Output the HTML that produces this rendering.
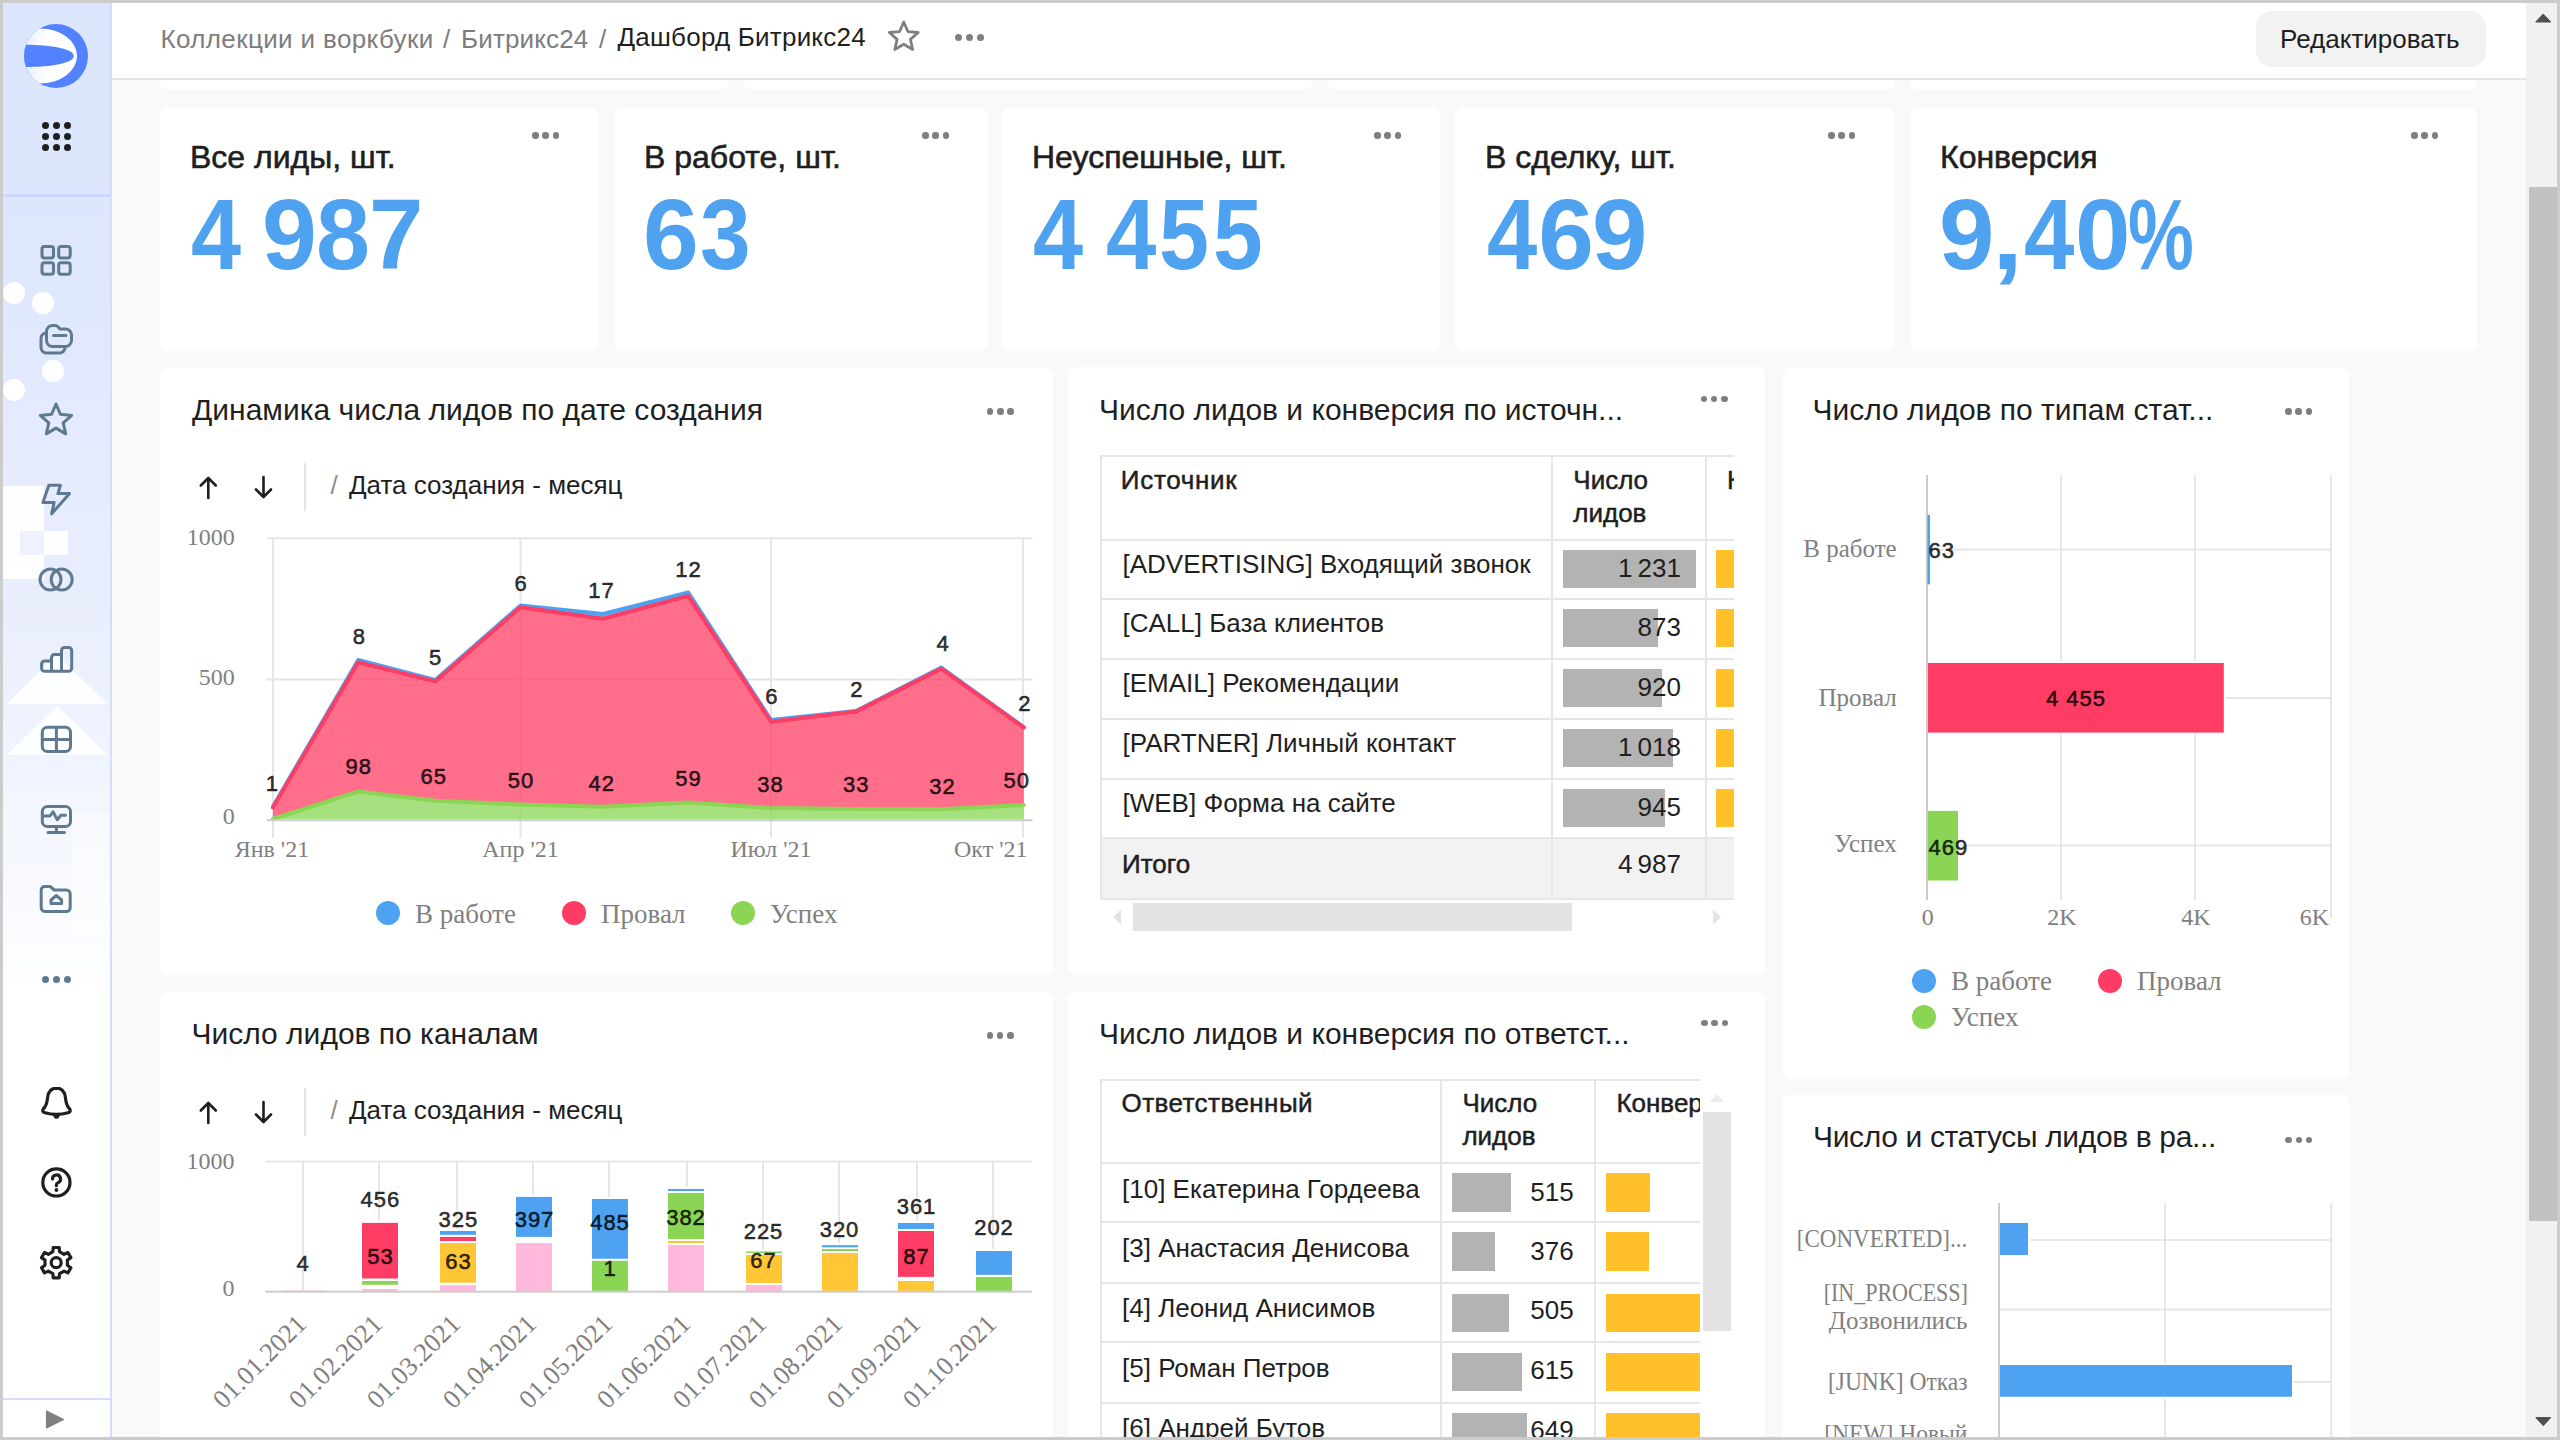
<!DOCTYPE html><html><head><meta charset="utf-8"><style>
html,body{margin:0;padding:0;}
body{width:2560px;height:1440px;overflow:hidden;position:relative;background:#f9f9f9;font-family:"Liberation Sans",sans-serif;}
.t{position:absolute;white-space:nowrap;}
.r{position:absolute;}
</style></head><body>
<div class="r" style="left:0px;top:0px;width:2560px;height:1440px;background:#f9f9f9;"></div>
<div class="r" style="left:160px;top:40px;width:568px;height:50px;background:#fff;border-radius:8px"></div>
<div class="r" style="left:744px;top:40px;width:568px;height:50px;background:#fff;border-radius:8px"></div>
<div class="r" style="left:1328px;top:40px;width:567px;height:50px;background:#fff;border-radius:8px"></div>
<div class="r" style="left:1910px;top:40px;width:567px;height:50px;background:#fff;border-radius:8px"></div>
<div class="r" style="left:160px;top:107.5px;width:438px;height:243.5px;background:#fff;border-radius:8px"></div>
<div class="t" style="left:190px;top:141.41px;font-family:'Liberation Sans', sans-serif;font-size:32px;line-height:32px;color:#1f1f1f;font-weight:400;-webkit-text-stroke:0.6px #1f1f1f;">Все лиды, шт.</div>
<div class="t" style="left:191.35px;top:184.05px;font-family:'Liberation Sans', sans-serif;font-size:100px;line-height:100px;color:#4fa2f0;font-weight:700;transform:scaleX(0.8993);transform-origin:0 0">4</div>
<div class="t" style="left:261.85px;top:184.05px;font-family:'Liberation Sans', sans-serif;font-size:100px;line-height:100px;color:#4fa2f0;font-weight:700;transform:scaleX(0.9855);transform-origin:0 0">9</div>
<div class="t" style="left:315.79px;top:184.05px;font-family:'Liberation Sans', sans-serif;font-size:100px;line-height:100px;color:#4fa2f0;font-weight:700;transform:scaleX(0.9715);transform-origin:0 0">8</div>
<div class="t" style="left:368.79px;top:184.05px;font-family:'Liberation Sans', sans-serif;font-size:100px;line-height:100px;color:#4fa2f0;font-weight:700;transform:scaleX(0.9787);transform-origin:0 0">7</div>
<div class="r" style="left:532.00px;top:132.45px;width:6.5px;height:6.5px;border-radius:50%;background:#7f7f7f"></div>
<div class="r" style="left:542.25px;top:132.45px;width:6.5px;height:6.5px;border-radius:50%;background:#7f7f7f"></div>
<div class="r" style="left:552.50px;top:132.45px;width:6.5px;height:6.5px;border-radius:50%;background:#7f7f7f"></div>
<div class="r" style="left:614px;top:107.5px;width:374px;height:243.5px;background:#fff;border-radius:8px"></div>
<div class="t" style="left:644px;top:141.41px;font-family:'Liberation Sans', sans-serif;font-size:32px;line-height:32px;color:#1f1f1f;font-weight:400;-webkit-text-stroke:0.6px #1f1f1f;">В работе, шт.</div>
<div class="t" style="left:642.89px;top:184.05px;font-family:'Liberation Sans', sans-serif;font-size:100px;line-height:100px;color:#4fa2f0;font-weight:700;transform:scaleX(1.0021);transform-origin:0 0">6</div>
<div class="t" style="left:699.80px;top:184.05px;font-family:'Liberation Sans', sans-serif;font-size:100px;line-height:100px;color:#4fa2f0;font-weight:700;transform:scaleX(0.9115);transform-origin:0 0">3</div>
<div class="r" style="left:922.00px;top:132.45px;width:6.5px;height:6.5px;border-radius:50%;background:#7f7f7f"></div>
<div class="r" style="left:932.25px;top:132.45px;width:6.5px;height:6.5px;border-radius:50%;background:#7f7f7f"></div>
<div class="r" style="left:942.50px;top:132.45px;width:6.5px;height:6.5px;border-radius:50%;background:#7f7f7f"></div>
<div class="r" style="left:1002px;top:107.5px;width:438px;height:243.5px;background:#fff;border-radius:8px"></div>
<div class="t" style="left:1032px;top:141.41px;font-family:'Liberation Sans', sans-serif;font-size:32px;line-height:32px;color:#1f1f1f;font-weight:400;-webkit-text-stroke:0.6px #1f1f1f;">Неуспешные, шт.</div>
<div class="t" style="left:1033.35px;top:184.05px;font-family:'Liberation Sans', sans-serif;font-size:100px;line-height:100px;color:#4fa2f0;font-weight:700;transform:scaleX(0.9011);transform-origin:0 0">4</div>
<div class="t" style="left:1105.74px;top:184.05px;font-family:'Liberation Sans', sans-serif;font-size:100px;line-height:100px;color:#4fa2f0;font-weight:700;transform:scaleX(0.9049);transform-origin:0 0">4</div>
<div class="t" style="left:1159.41px;top:184.05px;font-family:'Liberation Sans', sans-serif;font-size:100px;line-height:100px;color:#4fa2f0;font-weight:700;transform:scaleX(0.8994);transform-origin:0 0">5</div>
<div class="t" style="left:1213.03px;top:184.05px;font-family:'Liberation Sans', sans-serif;font-size:100px;line-height:100px;color:#4fa2f0;font-weight:700;transform:scaleX(0.8934);transform-origin:0 0">5</div>
<div class="r" style="left:1374.00px;top:132.45px;width:6.5px;height:6.5px;border-radius:50%;background:#7f7f7f"></div>
<div class="r" style="left:1384.25px;top:132.45px;width:6.5px;height:6.5px;border-radius:50%;background:#7f7f7f"></div>
<div class="r" style="left:1394.50px;top:132.45px;width:6.5px;height:6.5px;border-radius:50%;background:#7f7f7f"></div>
<div class="r" style="left:1455px;top:107.5px;width:439px;height:243.5px;background:#fff;border-radius:8px"></div>
<div class="t" style="left:1485px;top:141.41px;font-family:'Liberation Sans', sans-serif;font-size:32px;line-height:32px;color:#1f1f1f;font-weight:400;-webkit-text-stroke:0.6px #1f1f1f;">В сделку, шт.</div>
<div class="t" style="left:1487.25px;top:184.05px;font-family:'Liberation Sans', sans-serif;font-size:100px;line-height:100px;color:#4fa2f0;font-weight:700;transform:scaleX(0.9030);transform-origin:0 0">4</div>
<div class="t" style="left:1538.30px;top:184.05px;font-family:'Liberation Sans', sans-serif;font-size:100px;line-height:100px;color:#4fa2f0;font-weight:700;transform:scaleX(1.0000);transform-origin:0 0">6</div>
<div class="t" style="left:1592.01px;top:184.05px;font-family:'Liberation Sans', sans-serif;font-size:100px;line-height:100px;color:#4fa2f0;font-weight:700;transform:scaleX(0.9959);transform-origin:0 0">9</div>
<div class="r" style="left:1828.00px;top:132.45px;width:6.5px;height:6.5px;border-radius:50%;background:#7f7f7f"></div>
<div class="r" style="left:1838.25px;top:132.45px;width:6.5px;height:6.5px;border-radius:50%;background:#7f7f7f"></div>
<div class="r" style="left:1848.50px;top:132.45px;width:6.5px;height:6.5px;border-radius:50%;background:#7f7f7f"></div>
<div class="r" style="left:1910px;top:107.5px;width:567px;height:243.5px;background:#fff;border-radius:8px"></div>
<div class="t" style="left:1940px;top:141.41px;font-family:'Liberation Sans', sans-serif;font-size:32px;line-height:32px;color:#1f1f1f;font-weight:400;-webkit-text-stroke:0.6px #1f1f1f;">Конверсия</div>
<div class="t" style="left:1939.31px;top:184.05px;font-family:'Liberation Sans', sans-serif;font-size:100px;line-height:100px;color:#4fa2f0;font-weight:700;transform:scaleX(0.9959);transform-origin:0 0">9</div>
<div class="t" style="left:1992.39px;top:184.05px;font-family:'Liberation Sans', sans-serif;font-size:100px;line-height:100px;color:#4fa2f0;font-weight:700;transform:scaleX(1.1189);transform-origin:0 0">,</div>
<div class="t" style="left:2024.04px;top:184.05px;font-family:'Liberation Sans', sans-serif;font-size:100px;line-height:100px;color:#4fa2f0;font-weight:700;transform:scaleX(0.9049);transform-origin:0 0">4</div>
<div class="t" style="left:2075.42px;top:184.05px;font-family:'Liberation Sans', sans-serif;font-size:100px;line-height:100px;color:#4fa2f0;font-weight:700;transform:scaleX(0.9958);transform-origin:0 0">0</div>
<div class="t" style="left:2128.15px;top:184.05px;font-family:'Liberation Sans', sans-serif;font-size:100px;line-height:100px;color:#4fa2f0;font-weight:700;transform:scaleX(0.7399);transform-origin:0 0">%</div>
<div class="r" style="left:2411.00px;top:132.45px;width:6.5px;height:6.5px;border-radius:50%;background:#7f7f7f"></div>
<div class="r" style="left:2421.25px;top:132.45px;width:6.5px;height:6.5px;border-radius:50%;background:#7f7f7f"></div>
<div class="r" style="left:2431.50px;top:132.45px;width:6.5px;height:6.5px;border-radius:50%;background:#7f7f7f"></div>
<div class="r" style="left:160px;top:367.5px;width:893px;height:607px;background:#fff;border-radius:8px"></div>
<div class="r" style="left:1068px;top:367px;width:697px;height:607.5px;background:#fff;border-radius:8px"></div>
<div class="r" style="left:1782.5px;top:367.5px;width:566.5px;height:711px;background:#fff;border-radius:8px"></div>
<div class="r" style="left:160px;top:991.5px;width:893px;height:600px;background:#fff;border-radius:8px"></div>
<div class="r" style="left:1068px;top:991.5px;width:697px;height:600px;background:#fff;border-radius:8px"></div>
<div class="r" style="left:1782px;top:1095px;width:567.5px;height:500px;background:#fff;border-radius:8px"></div>
<div class="t" style="left:192px;top:394.61px;font-family:'Liberation Sans', sans-serif;font-size:30px;line-height:30px;color:#1f1f1f;font-weight:400;">Динамика числа лидов по дате создания</div>
<div class="r" style="left:986.75px;top:408.35px;width:6.5px;height:6.5px;border-radius:50%;background:#7f7f7f"></div>
<div class="r" style="left:997.00px;top:408.35px;width:6.5px;height:6.5px;border-radius:50%;background:#7f7f7f"></div>
<div class="r" style="left:1007.25px;top:408.35px;width:6.5px;height:6.5px;border-radius:50%;background:#7f7f7f"></div>
<svg class="r" style="left:190px;top:460px" width="100" height="60" viewBox="190 460 100 60"><path d="M208.3 498 V478.5 M200.8 485.5 L208.3 478 L215.8 485.5" fill="none" stroke="#1f1f1f" stroke-width="2.6" stroke-linecap="round" stroke-linejoin="round"/><path d="M263.5 477 V496.5 M256 489.5 L263.5 497 L271 489.5" fill="none" stroke="#1f1f1f" stroke-width="2.6" stroke-linecap="round" stroke-linejoin="round"/></svg>
<div class="r" style="left:304px;top:463px;width:2px;height:48px;background:#e5e5e5;"></div>
<div class="t" style="left:330.5px;top:472.49px;font-family:'Liberation Sans', sans-serif;font-size:26px;line-height:26px;color:#8c8c8c;font-weight:400;">/</div>
<div class="t" style="left:348.9px;top:472.49px;font-family:'Liberation Sans', sans-serif;font-size:26px;line-height:26px;color:#1f1f1f;font-weight:400;">Дата создания - месяц</div>
<svg class="r" style="left:160px;top:500px" width="893" height="380" viewBox="160 500 893 380"><rect x="266.7" y="537.3" width="765.7" height="2" fill="#e6e6e6"/><rect x="266.7" y="678.5" width="765.7" height="2" fill="#e6e6e6"/><rect x="272" y="538" width="2" height="299.5" fill="#e6e6e6"/><rect x="519.5" y="538" width="2" height="299.5" fill="#e6e6e6"/><rect x="770" y="538" width="2" height="299.5" fill="#e6e6e6"/><rect x="1022" y="538" width="2" height="299.5" fill="#e6e6e6"/><polygon points="273,806.5 358.25,660 435.25,680 520.5,605.5 603,614 688.25,592.5 771,720 856,711 941.25,667.5 1023.75,727 1023.75,727.6 941.25,668.6 856,711.6 771,721.7 688.25,595.9 603,618.8 520.5,607.2 435.25,681.4 358.25,662.2 273,807.5" fill="#4da2f1" fill-opacity="0.75"/><polyline points="273,806.5 358.25,660 435.25,680 520.5,605.5 603,614 688.25,592.5 771,720 856,711 941.25,667.5 1023.75,727" fill="none" stroke="#4da2f1" stroke-width="4" stroke-linejoin="round" stroke-linecap="round"/><polygon points="273,807.5 358.25,662.2 435.25,681.4 520.5,607.2 603,618.8 688.25,595.9 771,721.7 856,711.6 941.25,668.6 1023.75,727.6 1023.75,805 941.25,809.2 856,809 771,808 688.25,802.5 603,806.8 520.5,804.5 435.25,800.8 358.25,791.5 273,819" fill="#ff3d64" fill-opacity="0.75"/><polyline points="273,807.5 358.25,662.2 435.25,681.4 520.5,607.2 603,618.8 688.25,595.9 771,721.7 856,711.6 941.25,668.6 1023.75,727.6" fill="none" stroke="#ff3d64" stroke-width="4" stroke-linejoin="round" stroke-linecap="round"/><polygon points="273,819 358.25,791.5 435.25,800.8 520.5,804.5 603,806.8 688.25,802.5 771,808 856,809 941.25,809.2 1023.75,805 1023.75,819.25 941.25,819.25 856,819.25 771,819.25 688.25,819.25 603,819.25 520.5,819.25 435.25,819.25 358.25,819.25 273,819.25" fill="#8ad554" fill-opacity="0.75"/><polyline points="273,819 358.25,791.5 435.25,800.8 520.5,804.5 603,806.8 688.25,802.5 771,808 856,809 941.25,809.2 1023.75,805" fill="none" stroke="#8ad554" stroke-width="4" stroke-linejoin="round" stroke-linecap="round"/><rect x="266.7" y="819.25" width="765.7" height="2" fill="#cccccc"/></svg>
<div class="t" style="right:2325.3px;top:524.90px;font-family:'Liberation Serif', serif;font-size:24px;line-height:24px;color:#808080;font-weight:400;">1000</div>
<div class="t" style="right:2325.3px;top:664.90px;font-family:'Liberation Serif', serif;font-size:24px;line-height:24px;color:#808080;font-weight:400;">500</div>
<div class="t" style="right:2325.3px;top:804.40px;font-family:'Liberation Serif', serif;font-size:24px;line-height:24px;color:#808080;font-weight:400;">0</div>
<div class="t" style="left:271.9px;transform:translateX(-50%);top:837.40px;font-family:'Liberation Serif', serif;font-size:24px;line-height:24px;color:#808080;font-weight:400;">Янв '21</div>
<div class="t" style="left:520.5px;transform:translateX(-50%);top:837.40px;font-family:'Liberation Serif', serif;font-size:24px;line-height:24px;color:#808080;font-weight:400;">Апр '21</div>
<div class="t" style="left:771px;transform:translateX(-50%);top:837.40px;font-family:'Liberation Serif', serif;font-size:24px;line-height:24px;color:#808080;font-weight:400;">Июл '21</div>
<div class="t" style="right:1532.5px;top:837.40px;font-family:'Liberation Serif', serif;font-size:24px;line-height:24px;color:#808080;font-weight:400;">Окт '21</div>
<div class="t" style="left:272.25px;transform:translateX(-50%);top:772.63px;font-family:'Liberation Sans', sans-serif;font-size:22px;line-height:22px;color:rgba(0,0,0,0.8);font-weight:400;-webkit-text-stroke:0.6px rgba(0,0,0,0.78);letter-spacing:1px;">1</div>
<div class="t" style="left:359.25px;transform:translateX(-50%);top:626.38px;font-family:'Liberation Sans', sans-serif;font-size:22px;line-height:22px;color:rgba(0,0,0,0.8);font-weight:400;-webkit-text-stroke:0.6px rgba(0,0,0,0.78);letter-spacing:1px;">8</div>
<div class="t" style="left:435.5px;transform:translateX(-50%);top:646.88px;font-family:'Liberation Sans', sans-serif;font-size:22px;line-height:22px;color:rgba(0,0,0,0.8);font-weight:400;-webkit-text-stroke:0.6px rgba(0,0,0,0.78);letter-spacing:1px;">5</div>
<div class="t" style="left:521.0px;transform:translateX(-50%);top:572.63px;font-family:'Liberation Sans', sans-serif;font-size:22px;line-height:22px;color:rgba(0,0,0,0.8);font-weight:400;-webkit-text-stroke:0.6px rgba(0,0,0,0.78);letter-spacing:1px;">6</div>
<div class="t" style="left:601.5px;transform:translateX(-50%);top:580.13px;font-family:'Liberation Sans', sans-serif;font-size:22px;line-height:22px;color:rgba(0,0,0,0.8);font-weight:400;-webkit-text-stroke:0.6px rgba(0,0,0,0.78);letter-spacing:1px;">17</div>
<div class="t" style="left:688.5px;transform:translateX(-50%);top:558.88px;font-family:'Liberation Sans', sans-serif;font-size:22px;line-height:22px;color:rgba(0,0,0,0.8);font-weight:400;-webkit-text-stroke:0.6px rgba(0,0,0,0.78);letter-spacing:1px;">12</div>
<div class="t" style="left:771.75px;transform:translateX(-50%);top:686.38px;font-family:'Liberation Sans', sans-serif;font-size:22px;line-height:22px;color:rgba(0,0,0,0.8);font-weight:400;-webkit-text-stroke:0.6px rgba(0,0,0,0.78);letter-spacing:1px;">6</div>
<div class="t" style="left:856.75px;transform:translateX(-50%);top:678.88px;font-family:'Liberation Sans', sans-serif;font-size:22px;line-height:22px;color:rgba(0,0,0,0.8);font-weight:400;-webkit-text-stroke:0.6px rgba(0,0,0,0.78);letter-spacing:1px;">2</div>
<div class="t" style="left:943.0px;transform:translateX(-50%);top:632.63px;font-family:'Liberation Sans', sans-serif;font-size:22px;line-height:22px;color:rgba(0,0,0,0.8);font-weight:400;-webkit-text-stroke:0.6px rgba(0,0,0,0.78);letter-spacing:1px;">4</div>
<div class="t" style="left:1024.75px;transform:translateX(-50%);top:692.63px;font-family:'Liberation Sans', sans-serif;font-size:22px;line-height:22px;color:rgba(0,0,0,0.8);font-weight:400;-webkit-text-stroke:0.6px rgba(0,0,0,0.78);letter-spacing:1px;">2</div>
<div class="t" style="left:358.75px;transform:translateX(-50%);top:756.38px;font-family:'Liberation Sans', sans-serif;font-size:22px;line-height:22px;color:rgba(0,0,0,0.8);font-weight:400;-webkit-text-stroke:0.6px rgba(0,0,0,0.78);letter-spacing:1px;">98</div>
<div class="t" style="left:433.75px;transform:translateX(-50%);top:765.88px;font-family:'Liberation Sans', sans-serif;font-size:22px;line-height:22px;color:rgba(0,0,0,0.8);font-weight:400;-webkit-text-stroke:0.6px rgba(0,0,0,0.78);letter-spacing:1px;">65</div>
<div class="t" style="left:521.0px;transform:translateX(-50%);top:770.13px;font-family:'Liberation Sans', sans-serif;font-size:22px;line-height:22px;color:rgba(0,0,0,0.8);font-weight:400;-webkit-text-stroke:0.6px rgba(0,0,0,0.78);letter-spacing:1px;">50</div>
<div class="t" style="left:601.75px;transform:translateX(-50%);top:772.63px;font-family:'Liberation Sans', sans-serif;font-size:22px;line-height:22px;color:rgba(0,0,0,0.8);font-weight:400;-webkit-text-stroke:0.6px rgba(0,0,0,0.78);letter-spacing:1px;">42</div>
<div class="t" style="left:688.5px;transform:translateX(-50%);top:768.38px;font-family:'Liberation Sans', sans-serif;font-size:22px;line-height:22px;color:rgba(0,0,0,0.8);font-weight:400;-webkit-text-stroke:0.6px rgba(0,0,0,0.78);letter-spacing:1px;">59</div>
<div class="t" style="left:770.5px;transform:translateX(-50%);top:773.88px;font-family:'Liberation Sans', sans-serif;font-size:22px;line-height:22px;color:rgba(0,0,0,0.8);font-weight:400;-webkit-text-stroke:0.6px rgba(0,0,0,0.78);letter-spacing:1px;">38</div>
<div class="t" style="left:856.25px;transform:translateX(-50%);top:773.88px;font-family:'Liberation Sans', sans-serif;font-size:22px;line-height:22px;color:rgba(0,0,0,0.8);font-weight:400;-webkit-text-stroke:0.6px rgba(0,0,0,0.78);letter-spacing:1px;">33</div>
<div class="t" style="left:942.5px;transform:translateX(-50%);top:776.38px;font-family:'Liberation Sans', sans-serif;font-size:22px;line-height:22px;color:rgba(0,0,0,0.8);font-weight:400;-webkit-text-stroke:0.6px rgba(0,0,0,0.78);letter-spacing:1px;">32</div>
<div class="t" style="left:1016.75px;transform:translateX(-50%);top:770.13px;font-family:'Liberation Sans', sans-serif;font-size:22px;line-height:22px;color:rgba(0,0,0,0.8);font-weight:400;-webkit-text-stroke:0.6px rgba(0,0,0,0.78);letter-spacing:1px;">50</div>
<div class="r" style="left:375.8px;top:900.7px;width:24px;height:24px;border-radius:50%;background:#4da2f1"></div>
<div class="t" style="left:415px;top:900.69px;font-family:'Liberation Serif', serif;font-size:27px;line-height:27px;color:#808080;font-weight:400;">В работе</div>
<div class="r" style="left:561.9px;top:900.7px;width:24px;height:24px;border-radius:50%;background:#ff3d64"></div>
<div class="t" style="left:601px;top:900.69px;font-family:'Liberation Serif', serif;font-size:27px;line-height:27px;color:#808080;font-weight:400;">Провал</div>
<div class="r" style="left:731px;top:900.7px;width:24px;height:24px;border-radius:50%;background:#8ad554"></div>
<div class="t" style="left:770px;top:900.69px;font-family:'Liberation Serif', serif;font-size:27px;line-height:27px;color:#808080;font-weight:400;">Успех</div>
<div class="t" style="left:1099px;top:394.61px;font-family:'Liberation Sans', sans-serif;font-size:30px;line-height:30px;color:#1f1f1f;font-weight:400;">Число лидов и конверсия по источн...</div>
<div class="r" style="left:1700.50px;top:395.75px;width:6.5px;height:6.5px;border-radius:50%;background:#7f7f7f"></div>
<div class="r" style="left:1710.75px;top:395.75px;width:6.5px;height:6.5px;border-radius:50%;background:#7f7f7f"></div>
<div class="r" style="left:1721.00px;top:395.75px;width:6.5px;height:6.5px;border-radius:50%;background:#7f7f7f"></div>
<div class="r" style="left:1100px;top:455px;width:634px;height:446px;overflow:hidden">
<div class="r" style="left:0px;top:383px;width:700px;height:61px;background:#f2f2f2;"></div>
<div class="r" style="left:0px;top:0px;width:700px;height:2px;background:#e6e6e6;"></div>
<div class="r" style="left:0px;top:84px;width:700px;height:2px;background:#e6e6e6;"></div>
<div class="r" style="left:0px;top:143px;width:700px;height:2px;background:#e6e6e6;"></div>
<div class="r" style="left:0px;top:203px;width:700px;height:2px;background:#e6e6e6;"></div>
<div class="r" style="left:0px;top:263px;width:700px;height:2px;background:#e6e6e6;"></div>
<div class="r" style="left:0px;top:323px;width:700px;height:2px;background:#e6e6e6;"></div>
<div class="r" style="left:0px;top:382px;width:700px;height:2px;background:#e6e6e6;"></div>
<div class="r" style="left:0px;top:443px;width:700px;height:2px;background:#e6e6e6;"></div>
<div class="r" style="left:0px;top:0px;width:2px;height:445px;background:#e6e6e6;"></div>
<div class="r" style="left:451px;top:0px;width:2px;height:445px;background:#e6e6e6;"></div>
<div class="r" style="left:605px;top:0px;width:2px;height:445px;background:#e6e6e6;"></div>
<div class="t" style="left:20.799999999999955px;top:12.29px;font-family:'Liberation Sans', sans-serif;font-size:26px;line-height:26px;color:#1f1f1f;font-weight:400;-webkit-text-stroke:0.5px #1f1f1f;letter-spacing:0.7px;">Источник</div>
<div class="t" style="left:473.29999999999995px;top:12.29px;font-family:'Liberation Sans', sans-serif;font-size:26px;line-height:26px;color:#1f1f1f;font-weight:400;-webkit-text-stroke:0.5px #1f1f1f;">Число</div>
<div class="t" style="left:473.29999999999995px;top:44.99px;font-family:'Liberation Sans', sans-serif;font-size:26px;line-height:26px;color:#1f1f1f;font-weight:400;-webkit-text-stroke:0.5px #1f1f1f;">лидов</div>
<div class="t" style="left:627px;top:12.29px;font-family:'Liberation Sans', sans-serif;font-size:26px;line-height:26px;color:#1f1f1f;font-weight:400;-webkit-text-stroke:0.5px #1f1f1f;">Конверсия</div>
<div class="r" style="left:462.5px;top:94.5px;width:133px;height:38.5px;background:#b3b3b3;"></div>
<div class="r" style="left:616px;top:94.5px;width:40px;height:38.5px;background:#ffc02a;"></div>
<div class="t" style="left:22.5px;top:95.99px;font-family:'Liberation Sans', sans-serif;font-size:26px;line-height:26px;color:#1f1f1f;font-weight:400;">[ADVERTISING] Входящий звонок</div>
<div class="t" style="right:53px;top:99.99px;font-family:'Liberation Sans', sans-serif;font-size:26px;line-height:26px;color:#1f1f1f;font-weight:400;">1&#8201;231</div>
<div class="r" style="left:462.5px;top:153.5px;width:95px;height:38.5px;background:#b3b3b3;"></div>
<div class="r" style="left:616px;top:153.5px;width:40px;height:38.5px;background:#ffc02a;"></div>
<div class="t" style="left:22.5px;top:154.99px;font-family:'Liberation Sans', sans-serif;font-size:26px;line-height:26px;color:#1f1f1f;font-weight:400;">[CALL] База клиентов</div>
<div class="t" style="right:53px;top:158.99px;font-family:'Liberation Sans', sans-serif;font-size:26px;line-height:26px;color:#1f1f1f;font-weight:400;">873</div>
<div class="r" style="left:462.5px;top:213.5px;width:99px;height:38.5px;background:#b3b3b3;"></div>
<div class="r" style="left:616px;top:213.5px;width:40px;height:38.5px;background:#ffc02a;"></div>
<div class="t" style="left:22.5px;top:214.99px;font-family:'Liberation Sans', sans-serif;font-size:26px;line-height:26px;color:#1f1f1f;font-weight:400;">[EMAIL] Рекомендации</div>
<div class="t" style="right:53px;top:218.99px;font-family:'Liberation Sans', sans-serif;font-size:26px;line-height:26px;color:#1f1f1f;font-weight:400;">920</div>
<div class="r" style="left:462.5px;top:273.5px;width:110px;height:38.5px;background:#b3b3b3;"></div>
<div class="r" style="left:616px;top:273.5px;width:40px;height:38.5px;background:#ffc02a;"></div>
<div class="t" style="left:22.5px;top:274.99px;font-family:'Liberation Sans', sans-serif;font-size:26px;line-height:26px;color:#1f1f1f;font-weight:400;">[PARTNER] Личный контакт</div>
<div class="t" style="right:53px;top:278.99px;font-family:'Liberation Sans', sans-serif;font-size:26px;line-height:26px;color:#1f1f1f;font-weight:400;">1&#8201;018</div>
<div class="r" style="left:462.5px;top:333.5px;width:102px;height:38.5px;background:#b3b3b3;"></div>
<div class="r" style="left:616px;top:333.5px;width:40px;height:38.5px;background:#ffc02a;"></div>
<div class="t" style="left:22.5px;top:334.99px;font-family:'Liberation Sans', sans-serif;font-size:26px;line-height:26px;color:#1f1f1f;font-weight:400;">[WEB] Форма на сайте</div>
<div class="t" style="right:53px;top:338.99px;font-family:'Liberation Sans', sans-serif;font-size:26px;line-height:26px;color:#1f1f1f;font-weight:400;">945</div>
<div class="t" style="left:22px;top:395.99px;font-family:'Liberation Sans', sans-serif;font-size:26px;line-height:26px;color:#1f1f1f;font-weight:400;-webkit-text-stroke:0.5px #1f1f1f;">Итого</div>
<div class="t" style="right:53px;top:396.49px;font-family:'Liberation Sans', sans-serif;font-size:26px;line-height:26px;color:#1f1f1f;font-weight:400;">4&#8201;987</div>
</div>
<div class="r" style="left:1133px;top:903px;width:439px;height:28px;background:#e3e3e3;"></div>
<svg class="r" style="left:1105px;top:900px" width="625" height="35" viewBox="1105 900 625 35"><polygon points="1121,909.5 1121,924.5 1113,917" fill="#e3e3e3"/><polygon points="1713,909.5 1713,924.5 1721,917" fill="#e3e3e3"/></svg>
<div class="t" style="left:1812.5px;top:394.61px;font-family:'Liberation Sans', sans-serif;font-size:30px;line-height:30px;color:#1f1f1f;font-weight:400;">Число лидов по типам стат...</div>
<div class="r" style="left:2285.20px;top:408.45px;width:6.5px;height:6.5px;border-radius:50%;background:#7f7f7f"></div>
<div class="r" style="left:2295.45px;top:408.45px;width:6.5px;height:6.5px;border-radius:50%;background:#7f7f7f"></div>
<div class="r" style="left:2305.70px;top:408.45px;width:6.5px;height:6.5px;border-radius:50%;background:#7f7f7f"></div>
<svg class="r" style="left:1900px;top:460px" width="445" height="470" viewBox="1900 460 445 470"><rect x="1927" y="548.6" width="404" height="2" fill="#e6e6e6"/><rect x="1927" y="697" width="404" height="2" fill="#e6e6e6"/><rect x="1927" y="844.4" width="404" height="2" fill="#e6e6e6"/><rect x="2060" y="475" width="2" height="425" fill="#e6e6e6"/><rect x="2194" y="475" width="2" height="425" fill="#e6e6e6"/><rect x="2330" y="475" width="2" height="443" fill="#e6e6e6"/><rect x="1926" y="475" width="2" height="425" fill="#cccccc"/><rect x="1927.5" y="515" width="2.5" height="69.3" fill="#4da2f1"/><rect x="1928" y="661" width="297.8" height="73.6" fill="#fff"/><rect x="1928" y="809" width="32" height="73.6" fill="#fff"/><rect x="1928" y="663" width="295.8" height="69.6" fill="#ff3d64"/><rect x="1928" y="810.9" width="30" height="69.6" fill="#8ad554"/></svg>
<div class="t" style="left:1928.5px;top:540.38px;font-family:'Liberation Sans', sans-serif;font-size:22px;line-height:22px;color:rgba(0,0,0,0.8);font-weight:400;-webkit-text-stroke:0.6px rgba(0,0,0,0.78);letter-spacing:1px;">63</div>
<div class="t" style="left:2076px;transform:translateX(-50%);top:688.38px;font-family:'Liberation Sans', sans-serif;font-size:22px;line-height:22px;color:rgba(0,0,0,0.8);font-weight:400;-webkit-text-stroke:0.6px rgba(0,0,0,0.78);letter-spacing:1px;">4 455</div>
<div class="t" style="left:1928.6px;top:836.98px;font-family:'Liberation Sans', sans-serif;font-size:22px;line-height:22px;color:rgba(0,0,0,0.8);font-weight:400;-webkit-text-stroke:0.6px rgba(0,0,0,0.78);letter-spacing:1px;">469</div>
<div class="t" style="right:663.3px;top:535.86px;font-family:'Liberation Serif', serif;font-size:25px;line-height:25px;color:#808080;font-weight:400;">В работе</div>
<div class="t" style="right:663.3px;top:684.96px;font-family:'Liberation Serif', serif;font-size:25px;line-height:25px;color:#808080;font-weight:400;">Провал</div>
<div class="t" style="right:663.3px;top:831.46px;font-family:'Liberation Serif', serif;font-size:25px;line-height:25px;color:#808080;font-weight:400;">Успех</div>
<div class="t" style="left:1927.7px;transform:translateX(-50%);top:905.10px;font-family:'Liberation Serif', serif;font-size:24px;line-height:24px;color:#808080;font-weight:400;">0</div>
<div class="t" style="left:2061.8px;transform:translateX(-50%);top:905.10px;font-family:'Liberation Serif', serif;font-size:24px;line-height:24px;color:#808080;font-weight:400;">2K</div>
<div class="t" style="left:2196px;transform:translateX(-50%);top:905.10px;font-family:'Liberation Serif', serif;font-size:24px;line-height:24px;color:#808080;font-weight:400;">4K</div>
<div class="t" style="right:231px;top:905.10px;font-family:'Liberation Serif', serif;font-size:24px;line-height:24px;color:#808080;font-weight:400;">6K</div>
<div class="r" style="left:1911.8px;top:969px;width:24px;height:24px;border-radius:50%;background:#4da2f1"></div>
<div class="t" style="left:1951px;top:968.09px;font-family:'Liberation Serif', serif;font-size:27px;line-height:27px;color:#808080;font-weight:400;">В работе</div>
<div class="r" style="left:2097.7px;top:969px;width:24px;height:24px;border-radius:50%;background:#ff3d64"></div>
<div class="t" style="left:2137px;top:968.09px;font-family:'Liberation Serif', serif;font-size:27px;line-height:27px;color:#808080;font-weight:400;">Провал</div>
<div class="r" style="left:1911.8px;top:1004.9px;width:24px;height:24px;border-radius:50%;background:#8ad554"></div>
<div class="t" style="left:1951px;top:1003.89px;font-family:'Liberation Serif', serif;font-size:27px;line-height:27px;color:#808080;font-weight:400;">Успех</div>
<div class="t" style="left:191.5px;top:1019.31px;font-family:'Liberation Sans', sans-serif;font-size:30px;line-height:30px;color:#1f1f1f;font-weight:400;">Число лидов по каналам</div>
<div class="r" style="left:986.50px;top:1032.35px;width:6.5px;height:6.5px;border-radius:50%;background:#7f7f7f"></div>
<div class="r" style="left:996.75px;top:1032.35px;width:6.5px;height:6.5px;border-radius:50%;background:#7f7f7f"></div>
<div class="r" style="left:1007.00px;top:1032.35px;width:6.5px;height:6.5px;border-radius:50%;background:#7f7f7f"></div>
<svg class="r" style="left:190px;top:1084.7px" width="100" height="60.0" viewBox="190 1084.7 100 60.0"><path d="M208.3 1122.7 V1103.2 M200.8 1110.2 L208.3 1102.7 L215.8 1110.2" fill="none" stroke="#1f1f1f" stroke-width="2.6" stroke-linecap="round" stroke-linejoin="round"/><path d="M263.5 1101.7 V1121.2 M256 1114.2 L263.5 1121.7 L271 1114.2" fill="none" stroke="#1f1f1f" stroke-width="2.6" stroke-linecap="round" stroke-linejoin="round"/></svg>
<div class="r" style="left:304px;top:1087.7px;width:2px;height:48px;background:#e5e5e5;"></div>
<div class="t" style="left:330.5px;top:1097.19px;font-family:'Liberation Sans', sans-serif;font-size:26px;line-height:26px;color:#8c8c8c;font-weight:400;">/</div>
<div class="t" style="left:348.9px;top:1097.19px;font-family:'Liberation Sans', sans-serif;font-size:26px;line-height:26px;color:#1f1f1f;font-weight:400;">Дата создания - месяц</div>
<svg class="r" style="left:160px;top:1140px" width="893" height="160" viewBox="160 1140 893 160"><rect x="265.3" y="1160.6" width="766.5" height="2" fill="#e6e6e6"/><rect x="302" y="1161.6" width="2" height="130" fill="#e6e6e6"/><rect x="378" y="1161.6" width="2" height="130" fill="#e6e6e6"/><rect x="456" y="1161.6" width="2" height="130" fill="#e6e6e6"/><rect x="532" y="1161.6" width="2" height="130" fill="#e6e6e6"/><rect x="608" y="1161.6" width="2" height="130" fill="#e6e6e6"/><rect x="686" y="1161.6" width="2" height="130" fill="#e6e6e6"/><rect x="762" y="1161.6" width="2" height="130" fill="#e6e6e6"/><rect x="838" y="1161.6" width="2" height="130" fill="#e6e6e6"/><rect x="916" y="1161.6" width="2" height="130" fill="#e6e6e6"/><rect x="992" y="1161.6" width="2" height="130" fill="#e6e6e6"/><rect x="360" y="1220.9" width="40" height="70.79999999999995" fill="#fff"/><rect x="362" y="1289" width="36" height="2.7000000000000455" fill="#ffb9dd"/><rect x="362" y="1281" width="36" height="3.7999999999999545" fill="#8ad554"/><rect x="362" y="1222.9" width="36" height="55.59999999999991" fill="#ff3d64"/><rect x="438" y="1229" width="40" height="62.700000000000045" fill="#fff"/><rect x="440" y="1285.2" width="36" height="6.5" fill="#ffb9dd"/><rect x="440" y="1243" width="36" height="39.700000000000045" fill="#ffc636"/><rect x="440" y="1236.9" width="36" height="4.099999999999909" fill="#ff3d64"/><rect x="440" y="1231" width="36" height="3.7999999999999545" fill="#4da2f1"/><rect x="514" y="1194.9" width="40" height="96.79999999999995" fill="#fff"/><rect x="516" y="1243" width="36" height="48.700000000000045" fill="#ffb9dd"/><rect x="516" y="1196.9" width="36" height="40.0" fill="#4da2f1"/><rect x="590" y="1197" width="40" height="94.70000000000005" fill="#fff"/><rect x="592" y="1260.8" width="36" height="30.90000000000009" fill="#8ad554"/><rect x="592" y="1199" width="36" height="59.75" fill="#4da2f1"/><rect x="666" y="1187" width="40" height="104.70000000000005" fill="#fff"/><rect x="668" y="1189" width="36" height="2" fill="#4da2f1"/><rect x="668" y="1193" width="36" height="46" fill="#8ad554"/><rect x="668" y="1241" width="36" height="2" fill="#ffc636"/><rect x="668" y="1245" width="36" height="46.700000000000045" fill="#ffb9dd"/><rect x="744" y="1249.5" width="40" height="42.200000000000045" fill="#fff"/><rect x="746" y="1251.5" width="36" height="1.5" fill="#8ad554"/><rect x="746" y="1255" width="36" height="28" fill="#ffc636"/><rect x="746" y="1285" width="36" height="6.7000000000000455" fill="#ffb9dd"/><rect x="820" y="1243.2" width="40" height="48.5" fill="#fff"/><rect x="822" y="1245.2" width="36" height="2.099999999999909" fill="#4da2f1"/><rect x="822" y="1249" width="36" height="2" fill="#8ad554"/><rect x="822" y="1253" width="36" height="38.700000000000045" fill="#ffc636"/><rect x="896" y="1221" width="40" height="70.70000000000005" fill="#fff"/><rect x="898" y="1223" width="36" height="6" fill="#4da2f1"/><rect x="898" y="1231" width="36" height="45.90000000000009" fill="#ff3d64"/><rect x="898" y="1281" width="36" height="10.700000000000045" fill="#ffc636"/><rect x="974" y="1249" width="40" height="42.700000000000045" fill="#fff"/><rect x="976" y="1251" width="36" height="23.799999999999955" fill="#4da2f1"/><rect x="976" y="1277" width="36" height="14.700000000000045" fill="#8ad554"/><rect x="284" y="1290" width="40" height="1.5" fill="#ffb9dd" fill-opacity="0.5"/><rect x="265.3" y="1290.7" width="766.5" height="2" fill="#cccccc"/></svg>
<div class="t" style="right:2325.6px;top:1148.90px;font-family:'Liberation Serif', serif;font-size:24px;line-height:24px;color:#808080;font-weight:400;">1000</div>
<div class="t" style="right:2325.6px;top:1275.90px;font-family:'Liberation Serif', serif;font-size:24px;line-height:24px;color:#808080;font-weight:400;">0</div>
<div class="t" style="left:303.2px;transform:translateX(-50%);top:1253.38px;font-family:'Liberation Sans', sans-serif;font-size:22px;line-height:22px;color:rgba(0,0,0,0.8);font-weight:400;-webkit-text-stroke:0.6px rgba(0,0,0,0.78);letter-spacing:1px;">4</div>
<div class="t" style="left:380.3px;transform:translateX(-50%);top:1189.38px;font-family:'Liberation Sans', sans-serif;font-size:22px;line-height:22px;color:rgba(0,0,0,0.8);font-weight:400;-webkit-text-stroke:0.6px rgba(0,0,0,0.78);letter-spacing:1px;">456</div>
<div class="t" style="left:380.5px;transform:translateX(-50%);top:1246.38px;font-family:'Liberation Sans', sans-serif;font-size:22px;line-height:22px;color:rgba(0,0,0,0.8);font-weight:400;-webkit-text-stroke:0.6px rgba(0,0,0,0.78);letter-spacing:1px;">53</div>
<div class="t" style="left:458.4px;transform:translateX(-50%);top:1209.38px;font-family:'Liberation Sans', sans-serif;font-size:22px;line-height:22px;color:rgba(0,0,0,0.8);font-weight:400;-webkit-text-stroke:0.6px rgba(0,0,0,0.78);letter-spacing:1px;">325</div>
<div class="t" style="left:458.4px;transform:translateX(-50%);top:1251.28px;font-family:'Liberation Sans', sans-serif;font-size:22px;line-height:22px;color:rgba(0,0,0,0.8);font-weight:400;-webkit-text-stroke:0.6px rgba(0,0,0,0.78);letter-spacing:1px;">63</div>
<div class="t" style="left:534.5px;transform:translateX(-50%);top:1209.38px;font-family:'Liberation Sans', sans-serif;font-size:22px;line-height:22px;color:rgba(0,0,0,0.8);font-weight:400;-webkit-text-stroke:0.6px rgba(0,0,0,0.78);letter-spacing:1px;">397</div>
<div class="t" style="left:610.0px;transform:translateX(-50%);top:1212.38px;font-family:'Liberation Sans', sans-serif;font-size:22px;line-height:22px;color:rgba(0,0,0,0.8);font-weight:400;-webkit-text-stroke:0.6px rgba(0,0,0,0.78);letter-spacing:1px;">485</div>
<div class="t" style="left:610.0px;transform:translateX(-50%);top:1258.38px;font-family:'Liberation Sans', sans-serif;font-size:22px;line-height:22px;color:rgba(0,0,0,0.8);font-weight:400;-webkit-text-stroke:0.6px rgba(0,0,0,0.78);letter-spacing:1px;">1</div>
<div class="t" style="left:686.0px;transform:translateX(-50%);top:1206.88px;font-family:'Liberation Sans', sans-serif;font-size:22px;line-height:22px;color:rgba(0,0,0,0.8);font-weight:400;-webkit-text-stroke:0.6px rgba(0,0,0,0.78);letter-spacing:1px;">382</div>
<div class="t" style="left:763.5px;transform:translateX(-50%);top:1221.08px;font-family:'Liberation Sans', sans-serif;font-size:22px;line-height:22px;color:rgba(0,0,0,0.8);font-weight:400;-webkit-text-stroke:0.6px rgba(0,0,0,0.78);letter-spacing:1px;">225</div>
<div class="t" style="left:763.5px;transform:translateX(-50%);top:1250.38px;font-family:'Liberation Sans', sans-serif;font-size:22px;line-height:22px;color:rgba(0,0,0,0.8);font-weight:400;-webkit-text-stroke:0.6px rgba(0,0,0,0.78);letter-spacing:1px;">67</div>
<div class="t" style="left:839.5px;transform:translateX(-50%);top:1218.98px;font-family:'Liberation Sans', sans-serif;font-size:22px;line-height:22px;color:rgba(0,0,0,0.8);font-weight:400;-webkit-text-stroke:0.6px rgba(0,0,0,0.78);letter-spacing:1px;">320</div>
<div class="t" style="left:916.5px;transform:translateX(-50%);top:1196.38px;font-family:'Liberation Sans', sans-serif;font-size:22px;line-height:22px;color:rgba(0,0,0,0.8);font-weight:400;-webkit-text-stroke:0.6px rgba(0,0,0,0.78);letter-spacing:1px;">361</div>
<div class="t" style="left:916.5px;transform:translateX(-50%);top:1246.38px;font-family:'Liberation Sans', sans-serif;font-size:22px;line-height:22px;color:rgba(0,0,0,0.8);font-weight:400;-webkit-text-stroke:0.6px rgba(0,0,0,0.78);letter-spacing:1px;">87</div>
<div class="t" style="left:994.0px;transform:translateX(-50%);top:1216.88px;font-family:'Liberation Sans', sans-serif;font-size:22px;line-height:22px;color:rgba(0,0,0,0.8);font-weight:400;-webkit-text-stroke:0.6px rgba(0,0,0,0.78);letter-spacing:1px;">202</div>
<div class="t" style="left:292px;top:1310px;width:0;height:0;"><div style="position:absolute;right:0;top:0;transform-origin:100% 0;transform:rotate(-45deg);font-family:'Liberation Serif', serif;font-size:26.5px;line-height:26px;color:#808080;white-space:nowrap">01.01.2021</div></div>
<div class="t" style="left:368px;top:1310px;width:0;height:0;"><div style="position:absolute;right:0;top:0;transform-origin:100% 0;transform:rotate(-45deg);font-family:'Liberation Serif', serif;font-size:26.5px;line-height:26px;color:#808080;white-space:nowrap">01.02.2021</div></div>
<div class="t" style="left:446px;top:1310px;width:0;height:0;"><div style="position:absolute;right:0;top:0;transform-origin:100% 0;transform:rotate(-45deg);font-family:'Liberation Serif', serif;font-size:26.5px;line-height:26px;color:#808080;white-space:nowrap">01.03.2021</div></div>
<div class="t" style="left:522px;top:1310px;width:0;height:0;"><div style="position:absolute;right:0;top:0;transform-origin:100% 0;transform:rotate(-45deg);font-family:'Liberation Serif', serif;font-size:26.5px;line-height:26px;color:#808080;white-space:nowrap">01.04.2021</div></div>
<div class="t" style="left:598px;top:1310px;width:0;height:0;"><div style="position:absolute;right:0;top:0;transform-origin:100% 0;transform:rotate(-45deg);font-family:'Liberation Serif', serif;font-size:26.5px;line-height:26px;color:#808080;white-space:nowrap">01.05.2021</div></div>
<div class="t" style="left:676px;top:1310px;width:0;height:0;"><div style="position:absolute;right:0;top:0;transform-origin:100% 0;transform:rotate(-45deg);font-family:'Liberation Serif', serif;font-size:26.5px;line-height:26px;color:#808080;white-space:nowrap">01.06.2021</div></div>
<div class="t" style="left:752px;top:1310px;width:0;height:0;"><div style="position:absolute;right:0;top:0;transform-origin:100% 0;transform:rotate(-45deg);font-family:'Liberation Serif', serif;font-size:26.5px;line-height:26px;color:#808080;white-space:nowrap">01.07.2021</div></div>
<div class="t" style="left:828px;top:1310px;width:0;height:0;"><div style="position:absolute;right:0;top:0;transform-origin:100% 0;transform:rotate(-45deg);font-family:'Liberation Serif', serif;font-size:26.5px;line-height:26px;color:#808080;white-space:nowrap">01.08.2021</div></div>
<div class="t" style="left:906px;top:1310px;width:0;height:0;"><div style="position:absolute;right:0;top:0;transform-origin:100% 0;transform:rotate(-45deg);font-family:'Liberation Serif', serif;font-size:26.5px;line-height:26px;color:#808080;white-space:nowrap">01.09.2021</div></div>
<div class="t" style="left:982px;top:1310px;width:0;height:0;"><div style="position:absolute;right:0;top:0;transform-origin:100% 0;transform:rotate(-45deg);font-family:'Liberation Serif', serif;font-size:26.5px;line-height:26px;color:#808080;white-space:nowrap">01.10.2021</div></div>
<div class="t" style="left:1099px;top:1019.40px;font-family:'Liberation Sans', sans-serif;font-size:30px;line-height:30px;color:#1f1f1f;font-weight:400;">Число лидов и конверсия по ответст...</div>
<div class="r" style="left:1701.00px;top:1019.75px;width:6.5px;height:6.5px;border-radius:50%;background:#7f7f7f"></div>
<div class="r" style="left:1711.25px;top:1019.75px;width:6.5px;height:6.5px;border-radius:50%;background:#7f7f7f"></div>
<div class="r" style="left:1721.50px;top:1019.75px;width:6.5px;height:6.5px;border-radius:50%;background:#7f7f7f"></div>
<div class="r" style="left:1100px;top:1079px;width:600px;height:400px;overflow:hidden">
<div class="r" style="left:0px;top:0px;width:700px;height:2px;background:#e6e6e6"></div>
<div class="r" style="left:0px;top:82.70000000000005px;width:700px;height:2px;background:#e6e6e6"></div>
<div class="r" style="left:0px;top:141.79999999999995px;width:700px;height:2px;background:#e6e6e6"></div>
<div class="r" style="left:0px;top:202.5px;width:700px;height:2px;background:#e6e6e6"></div>
<div class="r" style="left:0px;top:261.9000000000001px;width:700px;height:2px;background:#e6e6e6"></div>
<div class="r" style="left:0px;top:322.5px;width:700px;height:2px;background:#e6e6e6"></div>
<div class="r" style="left:0px;top:0px;width:2px;height:400px;background:#e6e6e6"></div>
<div class="r" style="left:340px;top:0px;width:2px;height:400px;background:#e6e6e6"></div>
<div class="r" style="left:494px;top:0px;width:2px;height:400px;background:#e6e6e6"></div>
<div class="t" style="left:21.5px;top:11.49px;font-family:'Liberation Sans', sans-serif;font-size:26px;line-height:26px;color:#1f1f1f;font-weight:400;-webkit-text-stroke:0.5px #1f1f1f;letter-spacing:0.45px;">Ответственный</div>
<div class="t" style="left:362.4000000000001px;top:11.49px;font-family:'Liberation Sans', sans-serif;font-size:26px;line-height:26px;color:#1f1f1f;font-weight:400;-webkit-text-stroke:0.5px #1f1f1f;">Число</div>
<div class="t" style="left:362.4000000000001px;top:43.99px;font-family:'Liberation Sans', sans-serif;font-size:26px;line-height:26px;color:#1f1f1f;font-weight:400;-webkit-text-stroke:0.5px #1f1f1f;">лидов</div>
<div class="t" style="left:516.4000000000001px;top:11.49px;font-family:'Liberation Sans', sans-serif;font-size:26px;line-height:26px;color:#1f1f1f;font-weight:400;-webkit-text-stroke:0.5px #1f1f1f;">Конверсия</div>
<div class="r" style="left:352.20000000000005px;top:94.20000000000005px;width:59px;height:38.4px;background:#b3b3b3"></div>
<div class="r" style="left:505.5px;top:94.20000000000005px;width:44.7px;height:38.4px;background:#ffc02a"></div>
<div class="t" style="left:22px;top:97.09px;font-family:'Liberation Sans', sans-serif;font-size:26px;line-height:26px;color:#1f1f1f;font-weight:400;">[10] Екатерина Гордеева</div>
<div class="t" style="right:126.40000000000009px;top:99.59px;font-family:'Liberation Sans', sans-serif;font-size:26px;line-height:26px;color:#1f1f1f;font-weight:400;">515</div>
<div class="r" style="left:352.20000000000005px;top:153.29999999999995px;width:43px;height:38.4px;background:#b3b3b3"></div>
<div class="r" style="left:505.5px;top:153.29999999999995px;width:43px;height:38.4px;background:#ffc02a"></div>
<div class="t" style="left:22px;top:156.19px;font-family:'Liberation Sans', sans-serif;font-size:26px;line-height:26px;color:#1f1f1f;font-weight:400;">[3] Анастасия Денисова</div>
<div class="t" style="right:126.40000000000009px;top:158.69px;font-family:'Liberation Sans', sans-serif;font-size:26px;line-height:26px;color:#1f1f1f;font-weight:400;">376</div>
<div class="r" style="left:352.20000000000005px;top:214.5999999999999px;width:57px;height:38.4px;background:#b3b3b3"></div>
<div class="r" style="left:505.5px;top:214.5999999999999px;width:120px;height:38.4px;background:#ffc02a"></div>
<div class="t" style="left:22px;top:215.99px;font-family:'Liberation Sans', sans-serif;font-size:26px;line-height:26px;color:#1f1f1f;font-weight:400;">[4] Леонид Анисимов</div>
<div class="t" style="right:126.40000000000009px;top:218.49px;font-family:'Liberation Sans', sans-serif;font-size:26px;line-height:26px;color:#1f1f1f;font-weight:400;">505</div>
<div class="r" style="left:352.20000000000005px;top:273.70000000000005px;width:70px;height:38.4px;background:#b3b3b3"></div>
<div class="r" style="left:505.5px;top:273.70000000000005px;width:120px;height:38.4px;background:#ffc02a"></div>
<div class="t" style="left:22px;top:275.99px;font-family:'Liberation Sans', sans-serif;font-size:26px;line-height:26px;color:#1f1f1f;font-weight:400;">[5] Роман Петров</div>
<div class="t" style="right:126.40000000000009px;top:278.49px;font-family:'Liberation Sans', sans-serif;font-size:26px;line-height:26px;color:#1f1f1f;font-weight:400;">615</div>
<div class="r" style="left:352.20000000000005px;top:334.4000000000001px;width:75px;height:38.4px;background:#b3b3b3"></div>
<div class="r" style="left:505.5px;top:334.4000000000001px;width:120px;height:38.4px;background:#ffc02a"></div>
<div class="t" style="left:22px;top:335.69px;font-family:'Liberation Sans', sans-serif;font-size:26px;line-height:26px;color:#1f1f1f;font-weight:400;">[6] Андрей Бутов</div>
<div class="t" style="right:126.40000000000009px;top:338.19px;font-family:'Liberation Sans', sans-serif;font-size:26px;line-height:26px;color:#1f1f1f;font-weight:400;">649</div>
</div>
<div class="r" style="left:1703px;top:1112px;width:28px;height:218.5px;background:#e3e3e3;"></div>
<svg class="r" style="left:1700px;top:1085px" width="35" height="25" viewBox="1700 1085 35 25"><polygon points="1709.5,1102 1724.5,1102 1717,1094" fill="#ececec"/></svg>
<div class="t" style="left:1813px;top:1122.11px;font-family:'Liberation Sans', sans-serif;font-size:30px;line-height:30px;color:#1f1f1f;font-weight:400;letter-spacing:-0.35px;">Число и статусы лидов в ра...</div>
<div class="r" style="left:2285.25px;top:1136.75px;width:6.5px;height:6.5px;border-radius:50%;background:#7f7f7f"></div>
<div class="r" style="left:2295.50px;top:1136.75px;width:6.5px;height:6.5px;border-radius:50%;background:#7f7f7f"></div>
<div class="r" style="left:2305.75px;top:1136.75px;width:6.5px;height:6.5px;border-radius:50%;background:#7f7f7f"></div>
<svg class="r" style="left:1990px;top:1195px" width="355" height="245" viewBox="1990 1195 355 245"><rect x="1999" y="1239" width="332" height="2" fill="#e6e6e6"/><rect x="1999" y="1308.5" width="332" height="2" fill="#e6e6e6"/><rect x="1999" y="1381" width="332" height="2" fill="#e6e6e6"/><rect x="2164" y="1203" width="2" height="240" fill="#e6e6e6"/><rect x="2330.25" y="1203" width="2" height="240" fill="#e6e6e6"/><rect x="2000" y="1221" width="30" height="36" fill="#fff"/><rect x="2000" y="1363" width="294" height="35.75" fill="#fff"/><rect x="1998" y="1203" width="2" height="240" fill="#cccccc"/><rect x="2000" y="1223" width="28" height="32" fill="#4da2f1"/><rect x="2000" y="1365" width="292" height="31.75" fill="#4da2f1"/></svg>
<div class="t" style="right:592.5px;top:1226.06px;font-family:'Liberation Serif', serif;font-size:25px;line-height:25px;color:#808080;font-weight:400;transform:scaleX(0.92);transform-origin:100% 0;">[CONVERTED]...</div>
<div class="t" style="right:592.5px;top:1280.31px;font-family:'Liberation Serif', serif;font-size:25px;line-height:25px;color:#808080;font-weight:400;transform:scaleX(0.88);transform-origin:100% 0;">[IN_PROCESS]</div>
<div class="t" style="right:592.5px;top:1308.31px;font-family:'Liberation Serif', serif;font-size:25px;line-height:25px;color:#808080;font-weight:400;transform:scaleX(1.0);transform-origin:100% 0;">Дозвонились</div>
<div class="t" style="right:592.5px;top:1368.56px;font-family:'Liberation Serif', serif;font-size:25px;line-height:25px;color:#808080;font-weight:400;transform:scaleX(0.94);transform-origin:100% 0;">[JUNK] Отказ</div>
<div class="t" style="right:592.5px;top:1420.56px;font-family:'Liberation Serif', serif;font-size:25px;line-height:25px;color:#808080;font-weight:400;transform:scaleX(0.94);transform-origin:100% 0;">[NEW] Новый</div>
<div class="r" style="left:112px;top:0px;width:2414px;height:78px;background:#fff;"></div>
<div class="r" style="left:112px;top:78px;width:2414px;height:2px;background:#e5e5e5;"></div>
<div class="t" style="left:160.5px;top:25.99px;font-family:'Liberation Sans', sans-serif;font-size:26px;line-height:26px;color:#7d7d7d;font-weight:400;letter-spacing:0.37px;">Коллекции и воркбуки</div>
<div class="t" style="left:443px;top:25.99px;font-family:'Liberation Sans', sans-serif;font-size:26px;line-height:26px;color:#7d7d7d;font-weight:400;">/</div>
<div class="t" style="left:461px;top:25.99px;font-family:'Liberation Sans', sans-serif;font-size:26px;line-height:26px;color:#7d7d7d;font-weight:400;letter-spacing:0.15px;">Битрикс24</div>
<div class="t" style="left:599px;top:25.99px;font-family:'Liberation Sans', sans-serif;font-size:26px;line-height:26px;color:#7d7d7d;font-weight:400;">/</div>
<div class="t" style="left:617.5px;top:23.99px;font-family:'Liberation Sans', sans-serif;font-size:26px;line-height:26px;color:#1f1f1f;font-weight:400;letter-spacing:0.22px;">Дашборд Битрикс24</div>
<svg class="r" style="left:880px;top:15px" width="48" height="43" viewBox="880 15 48 43"><polygon points="903.75,22.00 907.86,31.54 918.21,32.50 910.41,39.36 912.68,49.50 903.75,44.20 894.82,49.50 897.09,39.36 889.29,32.50 899.64,31.54" fill="none" stroke="#808080" stroke-width="2.8" stroke-linejoin="round"/></svg>
<div class="r" style="left:955.25px;top:33.50px;width:7px;height:7px;border-radius:50%;background:#808080"></div>
<div class="r" style="left:966.25px;top:33.50px;width:7px;height:7px;border-radius:50%;background:#808080"></div>
<div class="r" style="left:977.25px;top:33.50px;width:7px;height:7px;border-radius:50%;background:#808080"></div>
<div class="r" style="left:2256px;top:11px;width:230px;height:56px;border-radius:16px;background:#f2f2f2"></div>
<div class="t" style="left:2280px;top:25.69px;font-family:'Liberation Sans', sans-serif;font-size:26px;line-height:26px;color:#1f1f1f;font-weight:400;">Редактировать</div>
<div class="r" style="left:0;top:0;width:110px;height:1440px;background:linear-gradient(180deg,#dce6fe 0px,#dde6fd 197px,#e3eafd 400px,#e9eefd 600px,#f0f4fe 760px,#f7f9fe 880px,#ffffff 1000px,#ffffff 1440px)"></div>
<div class="r" style="left:110px;top:0px;width:2px;height:1440px;background:#d3defd;"></div>
<div class="r" style="left:0px;top:194px;width:110px;height:3px;background:#cad8fc;"></div>
<div class="r" style="left:0px;top:1398px;width:110px;height:2px;background:#d3defd;"></div>
<div class="r" style="left:3.1999999999999993px;top:281.8px;width:22px;height:22px;border-radius:50%;background:#fff"></div>
<div class="r" style="left:32.3px;top:291.8px;width:22px;height:22px;border-radius:50%;background:#fff"></div>
<div class="r" style="left:42.3px;top:359.8px;width:22px;height:22px;border-radius:50%;background:#fff"></div>
<div class="r" style="left:3.1999999999999993px;top:379.3px;width:22px;height:22px;border-radius:50%;background:#fff"></div>
<div class="r" style="left:0px;top:486px;width:44px;height:93px;background:rgba(255,255,255,0.95);"></div>
<div class="r" style="left:20px;top:531px;width:24px;height:24px;background:#eef2fe;"></div>
<div class="r" style="left:44px;top:531px;width:24px;height:24px;background:rgba(255,255,255,0.95);"></div>
<svg class="r" style="left:0px;top:640px" width="110" height="120" viewBox="0 640 110 120"><polygon points="56.7,655 107.5,704 6.7,704" fill="#fff" fill-opacity="0.88"/><polygon points="57.5,705.8 107.5,755 6.7,755" fill="#fff" fill-opacity="0.88"/></svg>
<div class="r" style="left:72px;top:813px;width:38px;height:120px;background:rgba(255,255,255,0.4);"></div>
<svg class="r" style="left:20px;top:20px" width="72" height="72" viewBox="20 20 72 72"><defs><linearGradient id="lg" x1="0" y1="0" x2="1" y2="0"><stop offset="0" stop-color="#d4ddfb"/><stop offset="0.6" stop-color="#ffffff"/></linearGradient><clipPath id="lc"><circle cx="56" cy="56" r="32"/></clipPath></defs>
<circle cx="56" cy="56" r="32" fill="#5282ff"/>
<g clip-path="url(#lc)"><ellipse cx="40" cy="56" rx="37" ry="27.5" fill="url(#lg)"/><path d="M20 44.8 C48 44.2 73.8 48.5 73.8 56 C73.8 63.5 48 67.6 20 67 Z" fill="#5282ff"/></g></svg>
<div class="r" style="left:41.60px;top:121.60px;width:7.2px;height:7.2px;border-radius:50%;background:#1f1f1f"></div>
<div class="r" style="left:52.80px;top:121.60px;width:7.2px;height:7.2px;border-radius:50%;background:#1f1f1f"></div>
<div class="r" style="left:64.00px;top:121.60px;width:7.2px;height:7.2px;border-radius:50%;background:#1f1f1f"></div>
<div class="r" style="left:41.60px;top:132.80px;width:7.2px;height:7.2px;border-radius:50%;background:#1f1f1f"></div>
<div class="r" style="left:52.80px;top:132.80px;width:7.2px;height:7.2px;border-radius:50%;background:#1f1f1f"></div>
<div class="r" style="left:64.00px;top:132.80px;width:7.2px;height:7.2px;border-radius:50%;background:#1f1f1f"></div>
<div class="r" style="left:41.60px;top:144.00px;width:7.2px;height:7.2px;border-radius:50%;background:#1f1f1f"></div>
<div class="r" style="left:52.80px;top:144.00px;width:7.2px;height:7.2px;border-radius:50%;background:#1f1f1f"></div>
<div class="r" style="left:64.00px;top:144.00px;width:7.2px;height:7.2px;border-radius:50%;background:#1f1f1f"></div>
<svg class="r" style="left:30px;top:235px" width="52" height="52" viewBox="30 235 52 52"><rect x="42" y="246.5" width="11.5" height="11.5" rx="2.5" fill="none" stroke="#5f7a90" stroke-width="3" stroke-linecap="round" stroke-linejoin="round"/><rect x="58.7" y="246.5" width="11.5" height="11.5" rx="2.5" fill="none" stroke="#5f7a90" stroke-width="3" stroke-linecap="round" stroke-linejoin="round"/><rect x="42" y="262.8" width="11.5" height="11.5" rx="2.5" fill="none" stroke="#5f7a90" stroke-width="3" stroke-linecap="round" stroke-linejoin="round"/><rect x="58.7" y="262.8" width="11.5" height="11.5" rx="2.5" fill="none" stroke="#5f7a90" stroke-width="3" stroke-linecap="round" stroke-linejoin="round"/></svg>
<svg class="r" style="left:30px;top:315px" width="52" height="47" viewBox="30 315 52 47"><path d="M46.5 333 a5.5 5.5 0 0 0 -5.5 5.5 v9 a5.5 5.5 0 0 0 5.5 5.5 h13 a5.5 5.5 0 0 0 5.5 -5.5 v-1" fill="none" stroke="#5f7a90" stroke-width="3" stroke-linecap="round" stroke-linejoin="round"/><path d="M46.5 339.5 v-8 a6 6 0 0 1 6 -6 h2.5 a4 4 0 0 1 3 1.3 l2 2.2 h5.5 a6 6 0 0 1 6 6 v5.5 a6 6 0 0 1 -6 6 h-13 a6 6 0 0 1 -6 -6 z" fill="none" stroke="#5f7a90" stroke-width="3" stroke-linecap="round" stroke-linejoin="round"/><path d="M53.5 335.6 h12.5" fill="none" stroke="#5f7a90" stroke-width="3" stroke-linecap="round" stroke-linejoin="round"/></svg>
<svg class="r" style="left:30px;top:395px" width="52" height="47" viewBox="30 395 52 47"><polygon points="56.00,404.00 60.47,414.35 71.69,415.40 63.23,422.85 65.70,433.85 56.00,428.10 46.30,433.85 48.77,422.85 40.31,415.40 51.53,414.35" fill="none" stroke="#5f7a90" stroke-width="3" stroke-linecap="round" stroke-linejoin="round"/></svg>
<svg class="r" style="left:30px;top:475px" width="52" height="47" viewBox="30 475 52 47"><path d="M48.9 485.2 H60.4 L57.9 493.6 H69.6 L51.6 513.8 L54.2 502.4 H42.9 Z" fill="none" stroke="#5f7a90" stroke-width="3" stroke-linecap="round" stroke-linejoin="round" stroke-linejoin="round"/></svg>
<svg class="r" style="left:30px;top:560px" width="52" height="40" viewBox="30 560 52 40"><circle cx="50.5" cy="579.6" r="10.5" fill="none" stroke="#5f7a90" stroke-width="3" stroke-linecap="round" stroke-linejoin="round"/><circle cx="61.7" cy="579.6" r="10.5" fill="none" stroke="#5f7a90" stroke-width="3" stroke-linecap="round" stroke-linejoin="round"/></svg>
<svg class="r" style="left:30px;top:638px" width="52" height="42" viewBox="30 638 52 42"><path d="M41.6 668.2 V664 A3 3 0 0 1 44.6 661 H51.5 V657.5 A3 3 0 0 1 54.5 654.5 H61.5 V650.5 A3 3 0 0 1 64.5 647.5 H68.7 A3 3 0 0 1 71.7 650.5 V668.2 A3 3 0 0 1 68.7 671.2 H44.6 A3 3 0 0 1 41.6 668.2 Z M51.5 661 V671.2 M61.5 654.5 V671.2" fill="none" stroke="#5f7a90" stroke-width="3" stroke-linecap="round" stroke-linejoin="round"/></svg>
<svg class="r" style="left:30px;top:718px" width="52" height="42" viewBox="30 718 52 42"><rect x="42.3" y="727.3" width="28.2" height="24.2" rx="5" fill="none" stroke="#5f7a90" stroke-width="3" stroke-linecap="round" stroke-linejoin="round"/><path d="M42.3 739.4 h28.2 M56.4 727.3 v24.2" fill="none" stroke="#5f7a90" stroke-width="3" stroke-linecap="round" stroke-linejoin="round"/></svg>
<svg class="r" style="left:30px;top:798px" width="52" height="42" viewBox="30 798 52 42"><rect x="42.3" y="806.5" width="28.2" height="20" rx="5" fill="none" stroke="#5f7a90" stroke-width="3" stroke-linecap="round" stroke-linejoin="round"/><path d="M43.5 816 H50 L53 811.8 L57.3 819.8 L61 815.2 H65.5" fill="none" stroke="#5f7a90" stroke-width="3" stroke-linecap="round" stroke-linejoin="round"/><path d="M56.4 826.5 v6 M48 832.5 h16.5" fill="none" stroke="#5f7a90" stroke-width="3" stroke-linecap="round" stroke-linejoin="round"/></svg>
<svg class="r" style="left:30px;top:878px" width="52" height="42" viewBox="30 878 52 42"><path d="M41.2 890 a3.5 3.5 0 0 1 3.5 -3.5 h5.5 l4 3.5 h12 a4 4 0 0 1 4 4 v13.5 a4 4 0 0 1 -4 4 h-21 a4 4 0 0 1 -4 -4 z" fill="none" stroke="#5f7a90" stroke-width="3" stroke-linecap="round" stroke-linejoin="round"/><path d="M51 903.5 v-3.5 l5.3 -4.5 l5.3 4.5 v3.5 z" fill="none" stroke="#5f7a90" stroke-width="3" stroke-linecap="round" stroke-linejoin="round"/></svg>
<div class="r" style="left:41.60px;top:975.90px;width:7.2px;height:7.2px;border-radius:50%;background:#5f7a90"></div>
<div class="r" style="left:52.90px;top:975.90px;width:7.2px;height:7.2px;border-radius:50%;background:#5f7a90"></div>
<div class="r" style="left:64.20px;top:975.90px;width:7.2px;height:7.2px;border-radius:50%;background:#5f7a90"></div>
<svg class="r" style="left:30px;top:1080px" width="52" height="45" viewBox="30 1080 52 45"><path d="M56.5 1088.2 c-6 0 -8.5 4.5 -9 10 c-0.5 5 -1.5 8 -3.8 10.3 c-1.8 1.8 -1.2 3.6 1.2 4.2 c3.8 1 7.8 1.6 11.6 1.6 c3.8 0 7.8 -0.6 11.6 -1.6 c2.4 -0.6 3 -2.4 1.2 -4.2 c-2.3 -2.3 -3.3 -5.3 -3.8 -10.3 c-0.5 -5.5 -3 -10 -9 -10 z" fill="none" stroke="#1f1f1f" stroke-width="3.2" stroke-linecap="round" stroke-linejoin="round"/><path d="M52.6 1114.4 L53.8 1117 a2.9 2.9 0 0 0 5.4 0 L60.4 1114.4 z" fill="#1f1f1f"/></svg>
<svg class="r" style="left:30px;top:1160px" width="52" height="45" viewBox="30 1160 52 45"><circle cx="56.4" cy="1182.4" r="13.6" fill="none" stroke="#1f1f1f" stroke-width="3.2" stroke-linecap="round" stroke-linejoin="round"/><path d="M52.5 1179 a4 4 0 1 1 5.5 3.7 c-1.2 0.5 -1.6 1.2 -1.6 2.4 v0.6" fill="none" stroke="#1f1f1f" stroke-width="3.2" stroke-linecap="round" stroke-linejoin="round"/><circle cx="56.4" cy="1190" r="1.9" fill="#1f1f1f"/></svg>
<svg class="r" style="left:30px;top:1240px" width="52" height="50" viewBox="30 1240 52 50"><path d="M52.84 1251.70 L53.24 1247.48 L59.16 1247.48 L59.56 1251.70 L64.04 1254.29 L67.90 1252.53 L70.86 1257.65 L67.41 1260.11 L67.41 1265.29 L70.86 1267.75 L67.90 1272.87 L64.04 1271.11 L59.56 1273.70 L59.16 1277.92 L53.24 1277.92 L52.84 1273.70 L48.36 1271.11 L44.50 1272.87 L41.54 1267.75 L44.99 1265.29 L44.99 1260.11 L41.54 1257.65 L44.50 1252.53 L48.36 1254.29 Z" fill="none" stroke="#1f1f1f" stroke-width="3.2" stroke-linecap="round" stroke-linejoin="round"/><circle cx="56.2" cy="1262.7" r="5" fill="none" stroke="#1f1f1f" stroke-width="3.2" stroke-linecap="round" stroke-linejoin="round"/></svg>
<svg class="r" style="left:40px;top:1405px" width="30" height="30" viewBox="40 1405 30 30"><polygon points="46.5,1411 46.5,1428 63.5,1419.5" fill="#808080" stroke="#808080" stroke-width="1.2" stroke-linejoin="round"/></svg>
<div class="r" style="left:2526px;top:0px;width:34px;height:1440px;background:#f1f1f1;"></div>
<div class="r" style="left:2529px;top:187px;width:28px;height:1034px;background:#c1c1c1;"></div>
<svg class="r" style="left:2526px;top:0px" width="34" height="40" viewBox="2526 0 34 40"><polygon points="2543.2,14 2550.8,22 2535.7,22" fill="#505050" stroke="#505050" stroke-width="1" stroke-linejoin="round"/></svg>
<svg class="r" style="left:2526px;top:1400px" width="34" height="37" viewBox="2526 1400 34 37"><polygon points="2535.8,1417.5 2550.8,1417.5 2543.3,1425.7" fill="#505050" stroke="#505050" stroke-width="1" stroke-linejoin="round"/></svg>
<div class="r" style="left:0px;top:0px;width:2560px;height:3px;background:#cccccc;"></div>
<div class="r" style="left:0px;top:1437px;width:2560px;height:3px;background:#cccccc;"></div>
<div class="r" style="left:0px;top:0px;width:3px;height:1440px;background:#cccccc;"></div>
<div class="r" style="left:2557px;top:0px;width:3px;height:1440px;background:#cccccc;"></div>
</body></html>
